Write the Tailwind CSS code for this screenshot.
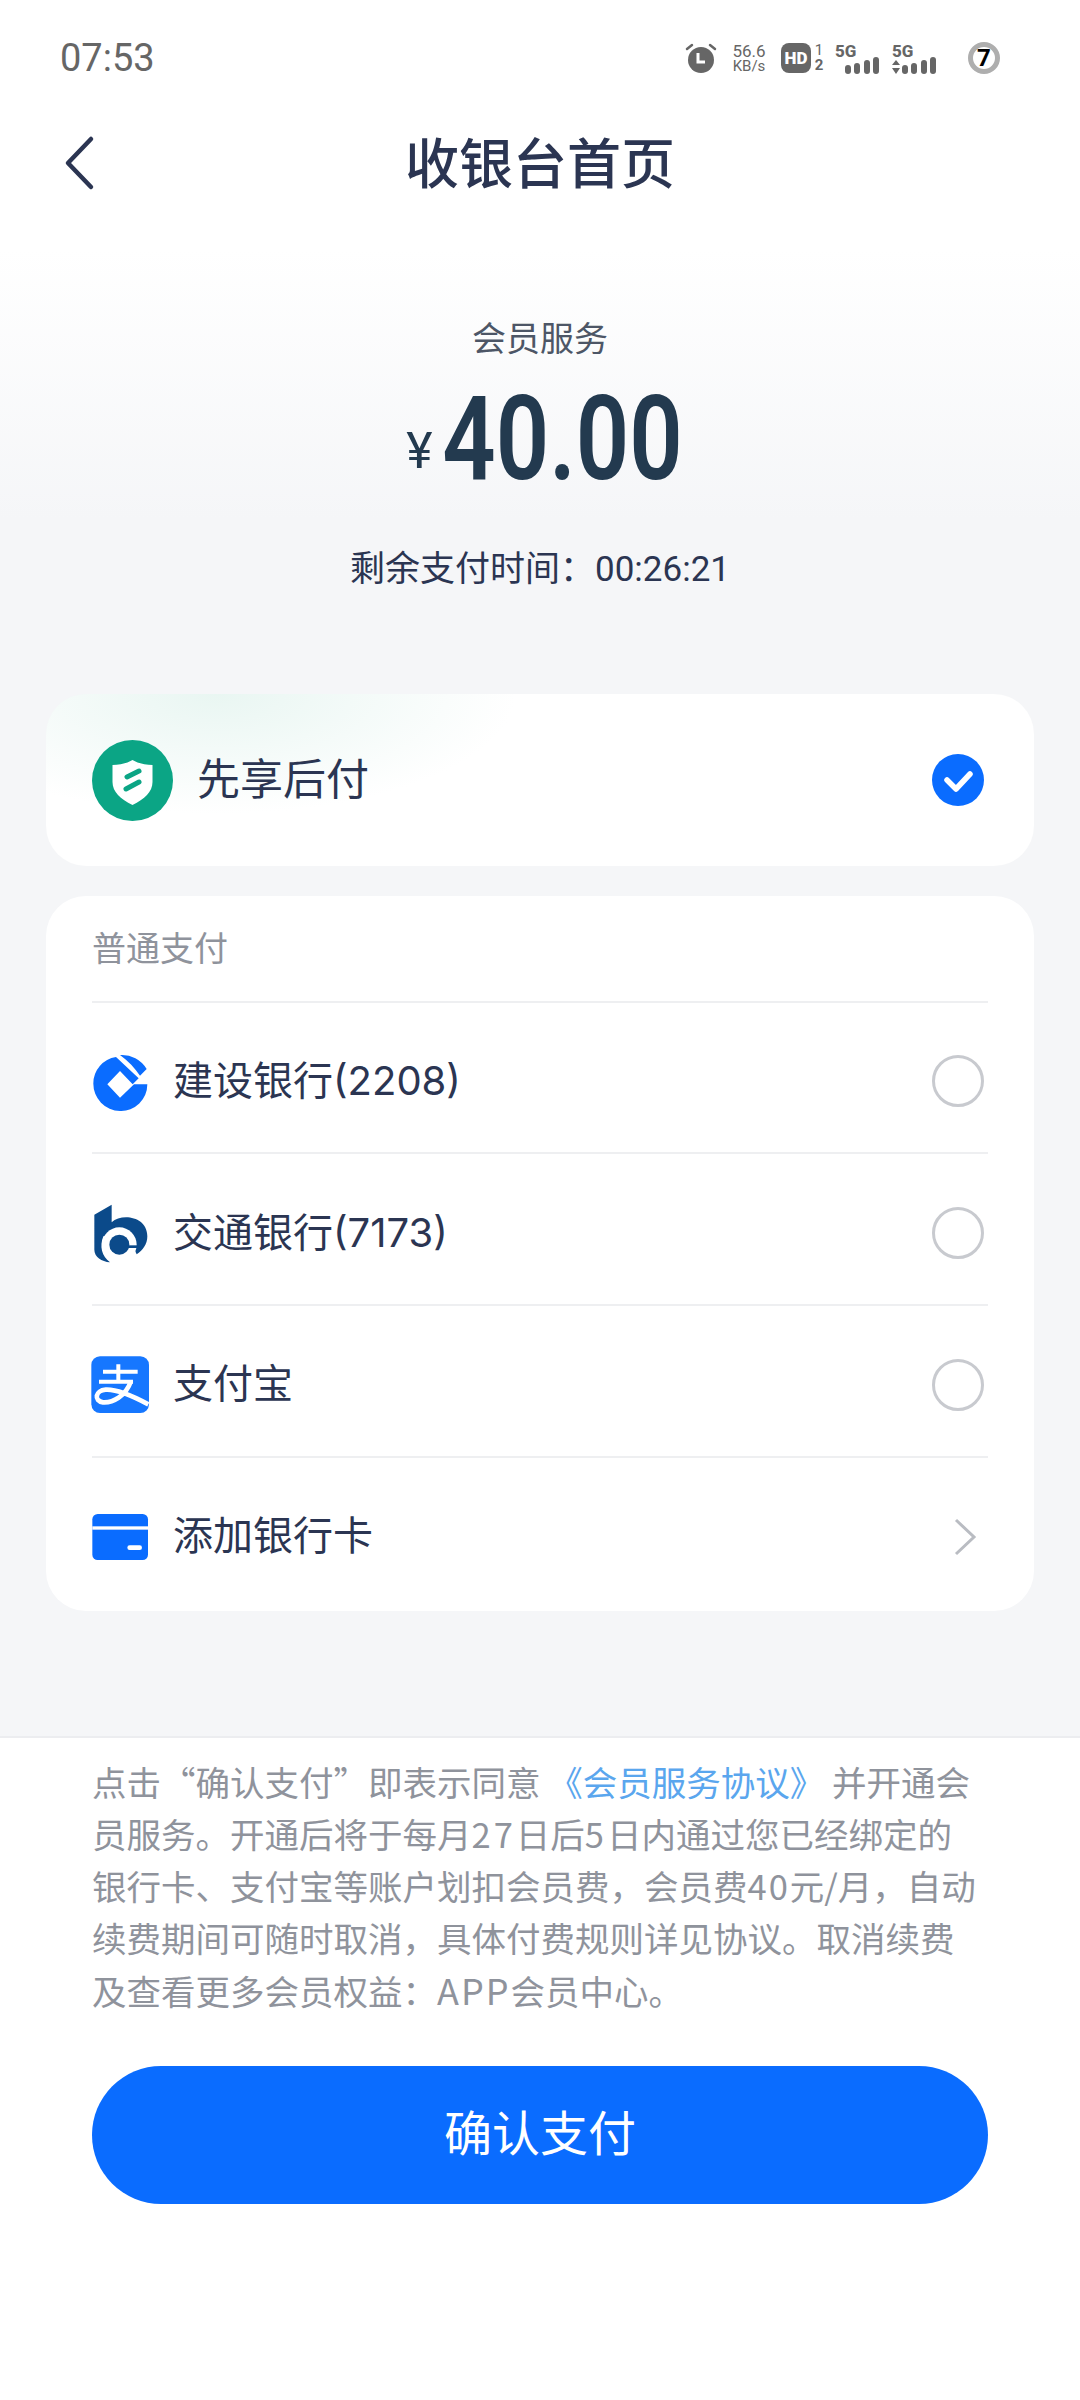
<!DOCTYPE html>
<html lang="zh-CN">
<head>
  <meta charset="UTF-8">
  <meta name="viewport" content="width=device-width, initial-scale=1.0">
  <title>收银台首页</title>
  <script src="https://cdn.jsdelivr.net/npm/@tailwindcss/browser@4"></script>
</head>
<body class="bg-white font-['Roboto','Noto_Sans_CJK_SC',sans-serif]">
  <div class="w-[1080px] h-[2400px] flex flex-col overflow-hidden bg-white">

    <!-- 上半部分 -->
    <div class="h-[1738px] shrink-0 bg-[linear-gradient(180deg,#ffffff_250px,#f5f6f8_520px)] border-b-2 border-[#eceDf0]">

      <!-- 状态栏 -->
      <div class="h-[116px] flex items-center justify-between pl-[60px] pr-[80px] text-[#666666]">
        <span class="text-[38px] leading-none">07:53</span>
        <div class="flex items-center">
          <svg class="w-[32px] h-[32px]" viewBox="0 0 32 32">
            <circle cx="16" cy="18" r="13" fill="#666666"/>
            <path d="M13 11v9h7" fill="none" stroke="#ffffff" stroke-width="3"/>
            <path d="M2 7l5-4M30 7l-5-4" stroke="#666666" stroke-width="2.5" stroke-linecap="round"/>
          </svg>
          <div class="ml-[12px] w-[40px] flex flex-col items-center text-[15px] leading-[14px]">
            <span class="text-[17px] leading-[16px]">56.6</span>
            <span>KB/s</span>
          </div>
          <div class="ml-[12px] w-[30px] h-[30px] rounded-[8px] bg-[#666666] text-white text-[17px] font-black flex items-center justify-center leading-none">HD</div>
          <div class="ml-[2px] w-[12px] flex flex-col items-center text-[15px] leading-[15px] font-bold"><span class="font-normal">1</span><span>2</span></div>
          <svg class="ml-[10px] w-[46px] h-[32px]" viewBox="0 0 46 32">
            <text x="0" y="15" font-size="17" font-weight="800" fill="#666666" font-family="Roboto">5G</text>
            <rect x="10" y="23" width="6" height="9" rx="3" fill="#666666"/>
            <rect x="19" y="21" width="6" height="11" rx="3" fill="#666666"/>
            <rect x="29" y="18" width="6" height="14" rx="3" fill="#666666"/>
            <rect x="38" y="15" width="6" height="17" rx="3" fill="#666666"/>
          </svg>
          <svg class="ml-[11px] w-[46px] h-[32px]" viewBox="0 0 46 32">
            <text x="0" y="15" font-size="17" font-weight="800" fill="#666666" font-family="Roboto">5G</text>
            <path d="M0 23l4-5 4 5zM0 26l4 6 4-6z" fill="#666666"/>
            <rect x="10" y="23" width="6" height="9" rx="3" fill="#666666"/>
            <rect x="19" y="21" width="6" height="11" rx="3" fill="#666666"/>
            <rect x="29" y="18" width="6" height="14" rx="3" fill="#666666"/>
            <rect x="38" y="15" width="6" height="17" rx="3" fill="#666666"/>
          </svg>
          <div class="ml-[30px] w-[32px] h-[32px] rounded-full border-[5px] border-[#aeaeae] flex items-center justify-center text-[24px] font-bold text-black leading-none">7</div>
        </div>
      </div>

      <!-- 导航栏 -->
      <div class="relative h-[94px] flex items-center justify-center">
        <svg class="absolute left-[62px] top-[19px] w-[34px] h-[56px]" viewBox="0 0 34 56">
          <path d="M29 4L6 28l23 24" fill="none" stroke="#2b3552" stroke-width="4.5" stroke-linecap="round" stroke-linejoin="round"/>
        </svg>
        <h1 class="text-[54px] leading-none font-medium text-[#2b3552] mt-[6px]">收银台首页</h1>
      </div>

      <!-- 金额 -->
      <div class="pt-[106px] flex flex-col items-center">
        <p class="text-[34px] leading-[46px] text-[#4d5666]">会员服务</p>
        <div class="mt-[22px] ml-[6px] h-[110px] flex items-center justify-center">
          <span class="w-[26px] text-[50px] leading-none text-[#233a4f] mt-[24px] flex justify-center">¥</span>
          <span class="ml-[12px] w-[235px] flex justify-center text-[117px] leading-none font-semibold text-[#233a4f] scale-x-80">40.00</span>
        </div>
        <p class="mt-[52px] text-[35px] leading-[48px] text-[#2b3552]">剩余支付时间：00:26:21</p>
      </div>

      <!-- 先享后付 -->
      <div class="mx-[46px] mt-[100px] h-[172px] rounded-[40px] bg-white bg-[radial-gradient(ellipse_300px_120px_at_170px_0px,#e9f6f2,#ffffff)] flex items-center pl-[46px] pr-[50px]">
        <svg class="w-[81px] h-[81px]" viewBox="0 0 81 81">
          <circle cx="40.5" cy="40.5" r="40.5" fill="#0ba585"/>
          <path d="M40.5 20c6 3.500 13 5 20 5v17c0 10-8 17-20 23-12-6-20-13-20-23V25c7 0 14-1.500 20-5z" fill="#ffffff"/>
          <path d="M35 37l12-6M34 49l13-7" stroke="#0ba585" stroke-width="5" stroke-linecap="round" fill="none"/>
        </svg>
        <span class="ml-[24px] text-[43px] leading-none text-[#2b3552]">先享后付</span>
        <svg class="ml-auto w-[52px] h-[52px]" viewBox="0 0 52 52">
          <circle cx="26" cy="26" r="26" fill="#0a6cff"/>
          <path d="M15 26l9 9 14-15" fill="none" stroke="#ffffff" stroke-width="5.500" stroke-linecap="round" stroke-linejoin="round"/>
        </svg>
      </div>

      <!-- 普通支付 -->
      <div class="mx-[46px] mt-[30px] rounded-[40px] bg-white px-[46px]">
        <div class="h-[107px] pt-[2px] flex items-center border-b-2 border-[#eeeff1] text-[34px] text-[#8f939c]">普通支付</div>

        <div class="h-[151px] pt-[6px] flex items-center border-b-2 border-[#eeeff1]">
          <svg class="ml-[-2px] w-[60px] h-[60px]" viewBox="90 58 180 180">
            <path d="M168 76L236 140L218 158L180 118L142 158L180 198L222 158L262 158A80 80 0 0 1 180 238A82 82 0 0 1 100 155A80 80 0 0 1 168 76Z" fill="#0a6cff"/>
            <path d="M180 70A85 85 0 0 1 260 112L240 132C225 110 205 88 180 70Z" fill="#0a6cff"/>
          </svg>
          <span class="ml-[23px] text-[40px] leading-none text-[#2b3552] font-['Inter','Noto_Sans_CJK_SC',sans-serif]">建设银行(2208)</span>
          <span class="ml-auto mr-[4px] w-[52px] h-[52px] rounded-full border-[3px] border-[#c8cacf]"></span>
        </div>

        <div class="h-[152px] pt-[8px] flex items-center border-b-2 border-[#eeeff1]">
          <svg class="ml-[-2px] w-[60px] h-[60px]" viewBox="90 70 180 180">
            <path d="M103 105L155 75V128C185 100 262 110 262 170C262 195 248 212 230 224L200 160L130 170C118 200 125 230 150 248C125 245 103 232 103 210Z" fill="#0b4a8a"/>
            <circle cx="178" cy="195" r="52" fill="#ffffff"/>
            <circle cx="178" cy="195" r="30" fill="#0b4a8a"/>
            <rect x="198" y="197" width="38" height="8" fill="#0b4a8a"/>
          </svg>
          <span class="ml-[23px] text-[40px] leading-none text-[#2b3552] font-['Inter','Noto_Sans_CJK_SC',sans-serif]">交通银行(7173)</span>
          <span class="ml-auto mr-[4px] w-[52px] h-[52px] rounded-full border-[3px] border-[#c8cacf]"></span>
        </div>

        <div class="h-[152px] pt-[8px] flex items-center border-b-2 border-[#eeeff1]">
          <svg class="ml-[-2px] w-[60px] h-[60px]" viewBox="93 80 180 180">
            <rect x="97" y="84" width="173" height="170" rx="26" fill="#1677ff"/>
            <path d="M132 130H236M120 160H222M178 108V160" fill="none" stroke="#ffffff" stroke-width="12"/>
            <path d="M216 158C200 205 160 224 132 222C104 218 108 186 140 184C175 182 225 205 268 228" fill="none" stroke="#ffffff" stroke-width="14"/>
          </svg>
          <span class="ml-[23px] text-[40px] leading-none text-[#2b3552]">支付宝</span>
          <span class="ml-auto mr-[4px] w-[52px] h-[52px] rounded-full border-[3px] border-[#c8cacf]"></span>
        </div>

        <div class="h-[153px] pt-[4px] flex items-center">
          <svg class="ml-[-2px] w-[60px] h-[60px]" viewBox="93 532 180 180">
            <rect x="100" y="553" width="167" height="138" rx="16" fill="#0a6cff"/>
            <rect x="100" y="590" width="167" height="10" fill="#ffffff"/>
            <rect x="205" y="647" width="44" height="14" rx="7" fill="#ffffff"/>
          </svg>
          <span class="ml-[23px] text-[40px] leading-none text-[#2b3552]">添加银行卡</span>
          <svg class="ml-auto mr-[11px] w-[24px] h-[40px]" viewBox="0 0 24 40">
            <path d="M3 3l18 17L3 37" fill="none" stroke="#b9bcc2" stroke-width="3"/>
          </svg>
        </div>
      </div>
    </div>

    <!-- 底部 -->
    <div class="px-[92px]">
      <div class="mt-[17px] text-[34.500px] leading-[52px] text-[#8f939c] whitespace-nowrap font-['Noto_Sans_CJK_SC',sans-serif] [text-spacing-trim:space-all]">
        <p>点击“确认支付”即表示同意 <span class="text-[#5aa6ee]">《会员服务协议》</span> 并开通会</p>
        <p>员服务。开通后将于每月<span class="tracking-[3px]">27</span>日后<span class="tracking-[3px]">5</span>日内通过您已经绑定的</p>
        <p>银行卡、支付宝等账户划扣会员费，会员费<span class="tracking-[2px]">40</span>元/月，自动</p>
        <p>续费期间可随时取消，具体付费规则详见协议。取消续费</p>
        <p>及查看更多会员权益：<span class="tracking-[2px] text-[36px]">APP</span>会员中心。</p>
      </div>
      <button class="mt-[50px] w-[896px] h-[138px] rounded-full bg-[#0a6cff] text-white text-[48px] leading-none">确认支付</button>
    </div>
  </div>
</body>
</html>
